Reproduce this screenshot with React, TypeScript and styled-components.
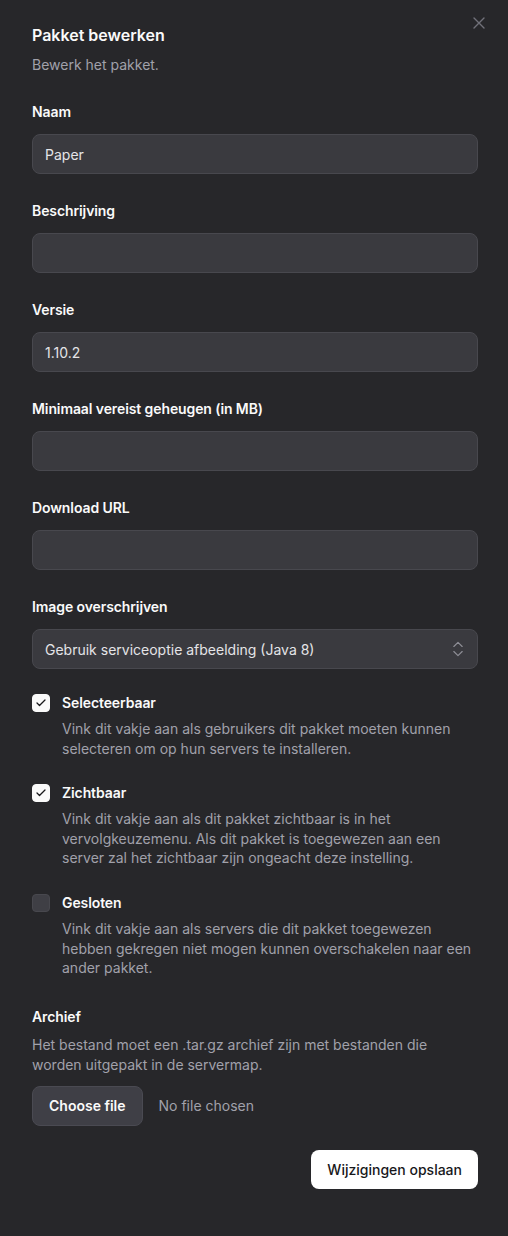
import React from "react";
import styled, { createGlobalStyle } from "styled-components";

const Global = createGlobalStyle`
  html, body { margin: 0; padding: 0; background: #27272a; }
  body { font-family: Inter, "Noto Sans", "Liberation Sans", sans-serif; -webkit-font-smoothing: antialiased; }
  * { box-sizing: border-box; }
`;

const Dialog = styled.div`
  position: relative;
  width: 508px;
  height: 1236px;
  background: #27272a;
  padding: 23px 30px 0 32px;
  display: flex;
  flex-direction: column;
  color: #fafafa;
`;

const CloseButton = styled.button`
  position: absolute;
  top: 15px;
  right: 21px;
  width: 16px;
  height: 16px;
  padding: 0;
  border: none;
  background: transparent;
  color: #71717a;
  display: flex;
  align-items: center;
  justify-content: center;
`;

const Title = styled.h2`
  margin: 0;
  font-size: 16px;
  line-height: 24px;
  font-weight: 600;
  color: #fafafa;
`;

const Subtitle = styled.p`
  margin: 8px 0 0;
  font-size: 14px;
  line-height: 20px;
  color: #a1a1aa;
`;

const Form = styled.div`
  margin-top: 27px;
  display: flex;
  flex-direction: column;
  gap: 27px;
`;

const Field = styled.div`
  display: flex;
  flex-direction: column;
  gap: 12px;
`;

const Label = styled.label`
  font-size: 14px;
  line-height: 20px;
  font-weight: 600;
  letter-spacing: -0.1px;
  color: #fafafa;
`;

const Input = styled.div`
  height: 40px;
  border-radius: 8px;
  background: #3a3a3f;
  border: 1px solid #48484e;
  padding: 0 12px;
  display: flex;
  align-items: center;
  font-size: 14px;
  color: #e4e4e7;
`;

const SelectBox = styled(Input)`
  justify-content: space-between;
  padding-right: 9px;
`;

const Checks = styled.div`
  margin-top: -3px;
  display: flex;
  flex-direction: column;
  gap: 25px;
`;

const CheckRow = styled.div`
  display: grid;
  grid-template-columns: 18px 1fr;
  column-gap: 12px;
  row-gap: 6px;
`;

const Box = styled.span<{ $checked: boolean }>`
  width: 18px;
  height: 18px;
  margin-top: 1px;
  border-radius: 4px;
  background: ${(p) => (p.$checked ? "#fafafa" : "#3f3f45")};
  border: 1px solid ${(p) => (p.$checked ? "#fafafa" : "#48484e")};
  display: flex;
  align-items: center;
  justify-content: center;
  color: #18181b;
`;

const CheckLabel = styled.span`
  font-size: 14px;
  line-height: 20px;
  font-weight: 600;
  letter-spacing: -0.1px;
  color: #fafafa;
`;

const Desc = styled.p`
  grid-column: 2;
  margin: 0;
  font-size: 14px;
  line-height: 19.6px;
  color: #a1a1aa;
`;

const Archive = styled.div`
  margin-top: 2px;
  display: flex;
  flex-direction: column;
`;

const ArchiveDesc = styled.p`
  margin: 8px 0 0;
  font-size: 14px;
  line-height: 20px;
  color: #a1a1aa;
`;

const FileRow = styled.div`
  margin-top: 11px;
  display: flex;
  align-items: center;
  gap: 16px;
`;

const FileButton = styled.button`
  height: 40px;
  padding: 0 16px;
  border-radius: 8px;
  background: #3f3f46;
  border: 1px solid #4a4a52;
  font-family: inherit;
  font-size: 14px;
  font-weight: 600;
  color: #fafafa;
`;

const FileName = styled.span`
  font-size: 14px;
  color: #a1a1aa;
`;

const Footer = styled.div`
  margin-top: 24px;
  display: flex;
  justify-content: flex-end;
`;

const SaveButton = styled.button`
  height: 39px;
  padding: 0 16px;
  border-radius: 8px;
  background: #ffffff;
  border: none;
  font-family: inherit;
  font-size: 14px;
  font-weight: 500;
  color: #18181b;
`;

const fields: { label: string; value?: string }[] = [
  { label: "Naam", value: "Paper" },
  { label: "Beschrijving" },
  { label: "Versie", value: "1.10.2" },
  { label: "Minimaal vereist geheugen (in MB)" },
  { label: "Download URL" },
];

const checks = [
  {
    label: "Selecteerbaar",
    checked: true,
    desc: "Vink dit vakje aan als gebruikers dit pakket moeten kunnen selecteren om op hun servers te installeren.",
  },
  {
    label: "Zichtbaar",
    checked: true,
    desc: "Vink dit vakje aan als dit pakket zichtbaar is in het vervolgkeuzemenu. Als dit pakket is toegewezen aan een server zal het zichtbaar zijn ongeacht deze instelling.",
  },
  {
    label: "Gesloten",
    checked: false,
    desc: "Vink dit vakje aan als servers die dit pakket toegewezen hebben gekregen niet mogen kunnen overschakelen naar een ander pakket.",
  },
];

export default function App() {
  return (
    <>
      <Global />
      <Dialog>
        <CloseButton aria-label="Close">
          <svg width="12" height="12" viewBox="0 0 12 12" fill="none" stroke="currentColor" strokeWidth="1.4" strokeLinecap="round">
            <path d="M1 1 11 11M11 1 1 11" />
          </svg>
        </CloseButton>
        <Title>Pakket bewerken</Title>
        <Subtitle>Bewerk het pakket.</Subtitle>
        <Form>
          {fields.map((f) => (
            <Field key={f.label}>
              <Label>{f.label}</Label>
              <Input>{f.value ?? ""}</Input>
            </Field>
          ))}
          <Field>
            <Label>Image overschrijven</Label>
            <SelectBox>
              <span>Gebruik serviceoptie afbeelding (Java 8)</span>
              <svg width="20" height="20" viewBox="0 0 24 24" fill="none" stroke="#8e8e96" strokeWidth="1.4" strokeLinecap="round" strokeLinejoin="round">
                <path d="m7 15 5 5 5-5" />
                <path d="m7 9 5-5 5 5" />
              </svg>
            </SelectBox>
          </Field>
          <Checks>
            {checks.map((c) => (
              <CheckRow key={c.label}>
                <Box $checked={c.checked}>
                  {c.checked && (
                    <svg width="12" height="12" viewBox="0 0 24 24" fill="none" stroke="currentColor" strokeWidth="2.6" strokeLinecap="round" strokeLinejoin="round">
                      <path d="M20 6 9 17l-5-5" />
                    </svg>
                  )}
                </Box>
                <CheckLabel>{c.label}</CheckLabel>
                <Desc>{c.desc}</Desc>
              </CheckRow>
            ))}
          </Checks>
          <Archive>
            <Label>Archief</Label>
            <ArchiveDesc>
              Het bestand moet een .tar.gz archief zijn met bestanden die worden uitgepakt in de servermap.
            </ArchiveDesc>
            <FileRow>
              <FileButton>Choose file</FileButton>
              <FileName>No file chosen</FileName>
            </FileRow>
          </Archive>
        </Form>
        <Footer>
          <SaveButton>Wijzigingen opslaan</SaveButton>
        </Footer>
      </Dialog>
    </>
  );
}
